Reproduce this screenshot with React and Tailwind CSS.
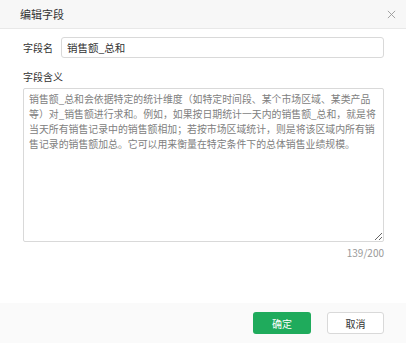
import React, { useState } from 'react';

const FONT = { fontFamily: '"Microsoft YaHei", "Noto Sans CJK SC", "Noto Sans", sans-serif' };

const DESC =
  '销售额_总和会依据特定的统计维度（如特定时间段、某个市场区域、某类产品等）对_销售额进行求和。例如，如果按日期统计一天内的销售额_总和，就是将当天所有销售记录中的销售额相加；若按市场区域统计，则是将该区域内所有销售记录的销售额加总。它可以用来衡量在特定条件下的总体销售业绩规模。';

export default function App() {
  const [name, setName] = useState('销售额_总和');
  const [desc, setDesc] = useState(DESC);

  return (
    <div className="w-[406px] h-[343px] flex flex-col bg-white overflow-hidden" style={FONT}>
      {/* Header */}
      <div className="h-[29px] shrink-0 flex items-center justify-between pl-[20px] pr-[7px] bg-[#f7f7f7] border-b border-[#e8e8e8]">
        <span className="text-[11px] text-[#333]">编辑字段</span>
        <button className="w-[16px] h-[16px] flex items-center justify-center text-[#999]">
          <svg width="9" height="9" viewBox="0 0 10 10" fill="none" stroke="currentColor" strokeWidth="1">
            <path d="M1 1L9 9M9 1L1 9" />
          </svg>
        </button>
      </div>

      {/* Body */}
      <div className="flex-1 flex flex-col pl-[23px] pr-[22px] pt-[8px]">
        <div className="flex items-center">
          <label className="w-[38px] shrink-0 text-[10px] text-[#333]">字段名</label>
          <input
            className="flex-1 h-[21px] border border-[#d9d9d9] rounded-[3px] px-[5px] text-[10.5px] text-[#333] outline-none"
            value={name}
            onChange={(e) => setName(e.target.value)}
          />
        </div>

        <label className="mt-[11px] mb-[4px] text-[10px] leading-[15px] text-[#333]">字段含义</label>
        <textarea
          className="h-[154px] border border-[#d9d9d9] rounded-[2px] px-[5px] py-[3px] text-[9.9px] leading-[15px] text-[#808080] outline-none"
          value={desc}
          onChange={(e) => setDesc(e.target.value)}
        />
        <div className="mt-[4px] text-right text-[10px] leading-[14px] text-[#999]">{desc.length}/200</div>
      </div>

      {/* Footer */}
      <div className="h-[40px] shrink-0 flex items-center justify-end gap-[16px] pr-[22px] bg-[#fafafa]">
        <button className="w-[58px] h-[22px] rounded-[3px] bg-[#1fab5c] text-white text-[10px]">确定</button>
        <button className="w-[57px] h-[22px] rounded-[3px] border border-[#d9d9d9] bg-white text-[#333] text-[10px]">取消</button>
      </div>
    </div>
  );
}
